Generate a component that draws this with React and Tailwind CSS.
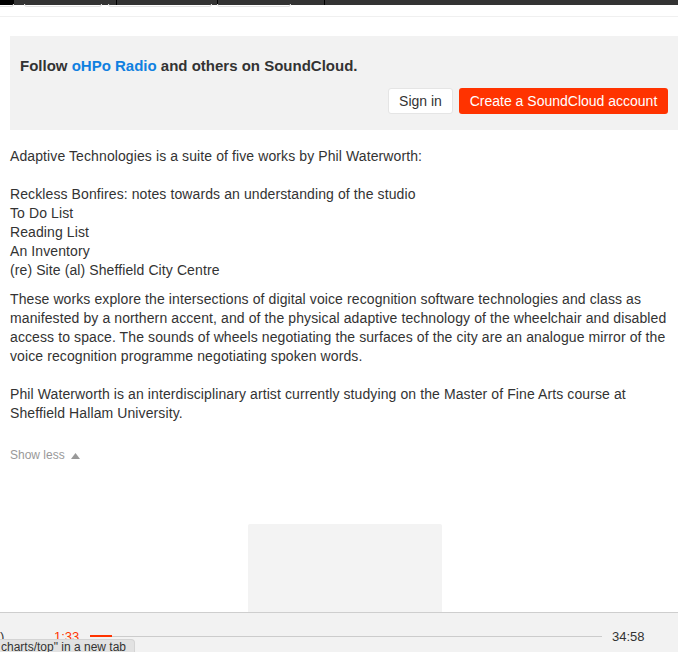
import React from 'react';

const font = { fontFamily: '"Liberation Sans", Arial, sans-serif' };

function TopStrip() {
    return (
        <div className="relative h-[17px] border-b border-[#f0f0f0]">
            <div className="flex h-[5px] bg-[#333333]">
                <div className="w-[14px] bg-black" />
                <div className="w-[103px] border-r border-black" />
                <div className="w-[101px] border-r border-black" />
                <div className="w-[107px] border-r border-black" />
                <div className="flex-1" />
            </div>
            {/* bottoms of the tab buttons under the dark bar */}
            <div className="absolute left-0 top-[4px] w-[14px] h-[3px] border-r border-b border-[#e2e2e2] rounded-br" />
            <div className="absolute left-[24px] top-[4px] w-[78px] h-[3px] border-x border-b border-[#e2e2e2] rounded-b" />
            <div className="absolute left-[108px] top-[4px] w-[104px] h-[3px] border-x border-b border-[#e2e2e2] rounded-b" />
            <div className="absolute left-[217px] top-[4px] w-[74px] h-[3px] border-x border-b border-[#e2e2e2] rounded-b" />
        </div>
    );
}

function FollowPanel() {
    return (
        <div className="ml-[10px] mt-[19px] h-[94px] bg-[#f2f2f2] pl-[10px] pr-[10px] pt-[21px]">
            <p className="text-[15px] font-bold text-[#333] leading-[18px]">
                Follow <a className="text-[#0f80e0]">oHPo Radio</a> and others on SoundCloud.
            </p>
            <div className="flex justify-end gap-[6px] mt-[13px]">
                <button className="h-[26px] w-[65px] bg-white border border-[#e5e5e5] rounded-[3px] text-[14px] text-[#333]">Sign in</button>
                <button className="h-[26px] w-[209px] bg-[#ff3300] rounded-[3px] text-[14px] text-white">Create a SoundCloud account</button>
            </div>
        </div>
    );
}

function Description() {
    return (
        <div className="px-[10px] pt-[17px] text-[14px] tracking-[0.1px] leading-[19px] text-[#333] whitespace-nowrap">
            <p>
                Adaptive Technologies is a suite of five works by Phil Waterworth:<br />
                <br />
                Reckless Bonfires: notes towards an understanding of the studio<br />
                To Do List<br />
                Reading List<br />
                An Inventory<br />
                (re) Site (al) Sheffield City Centre
            </p>
            <p className="mt-[10px]">
                These works explore the intersections of digital voice recognition software technologies and class as<br />
                manifested by a northern accent, and of the physical adaptive technology of the wheelchair and disabled<br />
                access to space. The sounds of wheels negotiating the surfaces of the city are an analogue mirror of the<br />
                voice recognition programme negotiating spoken words.<br />
                <br />
                Phil Waterworth is an interdisciplinary artist currently studying on the Master of Fine Arts course at<br />
                Sheffield Hallam University.
            </p>
            <button className="mt-[23px] flex items-center gap-[6px] text-[12px] tracking-normal text-[#999]">
                Show less
                <svg width="9" height="6" viewBox="0 0 9 6"><path d="M0 6 L4.5 0 L9 6 Z" fill="#999" /></svg>
            </button>
        </div>
    );
}

function PlayerBar() {
    return (
        <div className="relative h-[40px] border-t border-[#cecece] bg-[#f2f2f2]">
            <div className="flex items-center h-full pt-[7px]">
                <span className="w-[54px] text-[13px] text-[#333] leading-none">)</span>
                <span className="w-[36px] text-[13px] text-[#ff3300] leading-none">1:33</span>
                <div className="relative flex-1 h-px bg-[#cccccc]">
                    <div className="absolute left-0 top-[-1px] h-[2px] w-[22px] bg-[#ff3300]" />
                </div>
                <span className="w-[76px] pl-[10px] text-[13px] text-[#333] leading-none">34:58</span>
            </div>
            {/* browser link-preview status bubble */}
            <div className="absolute left-0 bottom-0 h-[13px] w-[135px] bg-[#e2e2e2] rounded-tr-[4px] border-t border-r border-[#d4d4d4] pl-[1px] text-[12px] leading-[14px] text-[#333] overflow-hidden whitespace-nowrap">
                charts/top" in a new tab
            </div>
        </div>
    );
}

export default function App() {
    return (
        <div className="w-[678px] h-[652px] bg-white overflow-hidden flex flex-col" style={font}>
            <TopStrip />
            <FollowPanel />
            <Description />
            <div className="flex-1 flex items-end justify-center">
                <div className="w-[194px] h-[88px] bg-[#f3f3f3] rounded-t-[2px] ml-[12px]" />
            </div>
            <PlayerBar />
        </div>
    );
}
